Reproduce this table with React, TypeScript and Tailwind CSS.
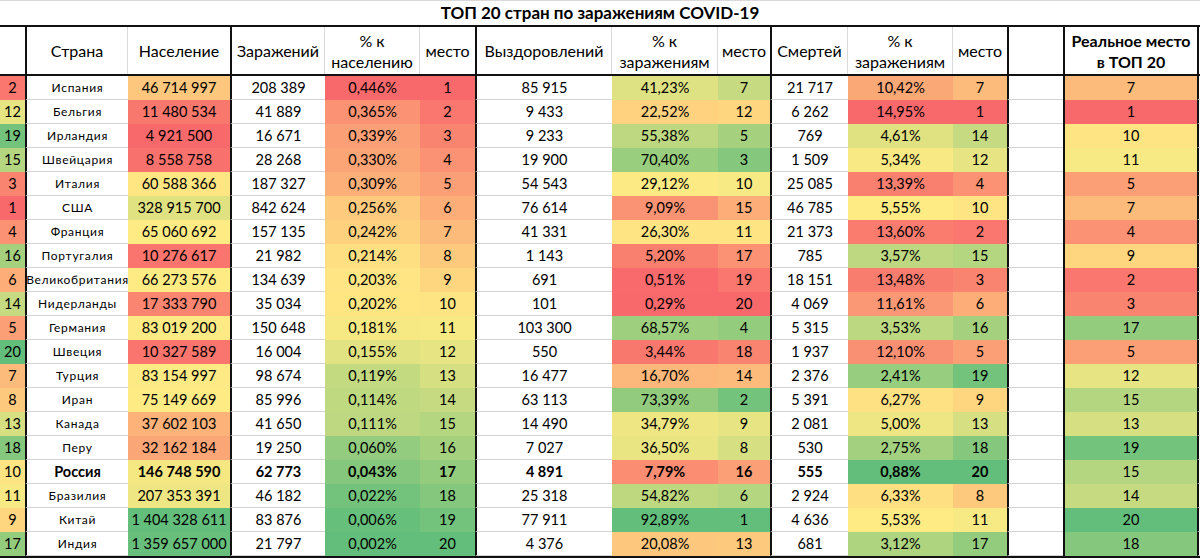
import React from "react";

type Row = [number, string, number, string, string, number, string, string, number, string, string, number, number];

const rows: Row[] = [
  [2, "Испания", 46714997, "208 389", "0,446%", 1, "85 915", "41,23%", 7, "21 717", "10,42%", 7, 7],
  [12, "Бельгия", 11480534, "41 889", "0,365%", 2, "9 433", "22,52%", 12, "6 262", "14,95%", 1, 1],
  [19, "Ирландия", 4921500, "16 671", "0,339%", 3, "9 233", "55,38%", 5, "769", "4,61%", 14, 10],
  [15, "Швейцария", 8558758, "28 268", "0,330%", 4, "19 900", "70,40%", 3, "1 509", "5,34%", 12, 11],
  [3, "Италия", 60588366, "187 327", "0,309%", 5, "54 543", "29,12%", 10, "25 085", "13,39%", 4, 5],
  [1, "США", 328915700, "842 624", "0,256%", 6, "76 614", "9,09%", 15, "46 785", "5,55%", 10, 7],
  [4, "Франция", 65060692, "157 135", "0,242%", 7, "41 331", "26,30%", 11, "21 373", "13,60%", 2, 4],
  [16, "Португалия", 10276617, "21 982", "0,214%", 8, "1 143", "5,20%", 17, "785", "3,57%", 15, 9],
  [6, "Великобритания", 66273576, "134 639", "0,203%", 9, "691", "0,51%", 19, "18 151", "13,48%", 3, 2],
  [14, "Нидерланды", 17333790, "35 034", "0,202%", 10, "101", "0,29%", 20, "4 069", "11,61%", 6, 3],
  [5, "Германия", 83019200, "150 648", "0,181%", 11, "103 300", "68,57%", 4, "5 315", "3,53%", 16, 17],
  [20, "Швеция", 10327589, "16 004", "0,155%", 12, "550", "3,44%", 18, "1 937", "12,10%", 5, 5],
  [7, "Турция", 83154997, "98 674", "0,119%", 13, "16 477", "16,70%", 14, "2 376", "2,41%", 19, 12],
  [8, "Иран", 75149669, "85 996", "0,114%", 14, "63 113", "73,39%", 2, "5 391", "6,27%", 9, 15],
  [13, "Канада", 37602103, "41 650", "0,111%", 15, "14 490", "34,79%", 9, "2 081", "5,00%", 13, 13],
  [18, "Перу", 32162184, "19 250", "0,060%", 16, "7 027", "36,50%", 8, "530", "2,75%", 18, 19],
  [10, "Россия", 146748590, "62 773", "0,043%", 17, "4 891", "7,79%", 16, "555", "0,88%", 20, 15],
  [11, "Бразилия", 207353391, "46 182", "0,022%", 18, "25 318", "54,82%", 6, "2 924", "6,33%", 8, 14],
  [9, "Китай", 1404328611, "83 876", "0,006%", 19, "77 911", "92,89%", 1, "4 636", "5,53%", 11, 20],
  [17, "Индия", 1359657000, "21 797", "0,002%", 20, "4 376", "20,08%", 13, "681", "3,12%", 17, 18],
];

// excel 3-colour scale
const RED = [248, 105, 107];
const YEL = [255, 235, 132];
const GRN = [99, 190, 123];

const num = (v: string | number) => (typeof v === "number" ? v : parseFloat(v.replace(",", ".").replace(/\s/g, "")));

function median(a: number[]) {
  const s = [...a].sort((x, y) => x - y);
  const n = s.length;
  return n % 2 ? s[(n - 1) / 2] : (s[n / 2 - 1] + s[n / 2]) / 2;
}

function mix(a: number[], b: number[], t: number) {
  return `rgb(${a.map((c, i) => Math.round(c + (b[i] - c) * t)).join(",")})`;
}

// which columns are coloured, and the colour for the lowest value
const scales: Record<number, { low: number[]; high: number[] }> = {
  0: { low: RED, high: GRN },
  2: { low: RED, high: GRN },
  4: { low: GRN, high: RED },
  5: { low: RED, high: GRN },
  7: { low: RED, high: GRN },
  8: { low: GRN, high: RED },
  10: { low: GRN, high: RED },
  11: { low: RED, high: GRN },
  12: { low: RED, high: GRN },
};

function colorFor(col: number, v: number) {
  const vals = rows.map((r) => num(r[col]));
  const lo = Math.min(...vals);
  const hi = Math.max(...vals);
  const mid = median(vals);
  const { low, high } = scales[col];
  if (v <= mid) return mix(low, YEL, (v - lo) / (mid - lo));
  return mix(YEL, high, (v - mid) / (hi - mid));
}

const fmt = (n: number) => String(n).replace(/\B(?=(\d{3})+(?!\d))/g, " ");

const GRID =
  "grid grid-cols-[25px_103px_102px_95px_95px_55px_137px_106px_52px_78px_105px_54px_56px_134px_3px]";

// thick group separators, by grid column
const thick: Record<number, string> = {
  1: "border-l-2 border-l-[#111]",
  3: "border-l-2 border-l-[#111]",
  6: "border-l-2 border-l-[#111]",
  9: "border-l-2 border-l-[#111]",
  12: "border-l-2 border-l-[#111]",
  13: "border-l-2 border-l-[#111]",
  14: "border-l-2 border-l-[#111]",
};

const headThin = new Set([1, 3, 4, 6, 7, 9, 10]);

const heads: (string[] | null)[] = [
  null,
  ["Страна"],
  ["Население"],
  ["Заражений"],
  ["% к", "населению"],
  ["место"],
  ["Выздоровлений"],
  ["% к", "заражениям"],
  ["место"],
  ["Смертей"],
  ["% к", "заражениям"],
  ["место"],
  null,
  ["Реальное место", "в ТОП 20"],
  null,
];

function HeaderRow() {
  return (
    <div className={`${GRID} h-[49px] border-b-2 border-b-[#111]`}>
      {heads.map((h, i) => (
        <div
          key={i}
          className={`flex flex-col items-center justify-center leading-[21px] text-[16px] ${thick[i] ?? ""} ${
            headThin.has(i) ? "border-r border-r-[#d9d9d9]" : ""
          } ${i === 13 ? "font-bold" : ""}`}
        >
          {h?.map((line) => (
            <span key={line} className="whitespace-nowrap">
              {line}
            </span>
          ))}
        </div>
      ))}
    </div>
  );
}

function BodyRow({ r }: { r: Row }) {
  const bold = r[1] === "Россия";
  // data columns -> grid columns (grid col 12 is the empty spacer)
  const cells: { text: string; v?: number; col?: number; kind?: string }[] = [
    { text: String(r[0]), v: r[0], col: 0, kind: "rank" },
    { text: r[1], kind: "country" },
    { text: fmt(r[2]), v: r[2], col: 2 },
    { text: r[3] },
    { text: r[4], v: num(r[4]), col: 4 },
    { text: String(r[5]), v: r[5], col: 5 },
    { text: r[6] },
    { text: r[7], v: num(r[7]), col: 7 },
    { text: String(r[8]), v: r[8], col: 8 },
    { text: r[9] },
    { text: r[10], v: num(r[10]), col: 10 },
    { text: String(r[11]), v: r[11], col: 11 },
    { text: "", kind: "empty" },
    { text: String(r[12]), v: r[12], col: 12, kind: "real" },
    { text: "", kind: "empty" },
  ];

  return (
    <div className={`${GRID} h-6`}>
      {cells.map((c, i) => {
        const colored = c.col !== undefined;
        const isBold = bold && c.kind !== "rank" && c.kind !== "real" && c.kind !== "empty";
        return (
          <div
            key={i}
            style={colored ? { backgroundColor: colorFor(c.col!, c.v!) } : undefined}
            className={`flex items-center justify-center whitespace-nowrap ${thick[i] ?? ""} ${
              colored ? "" : "border-b border-b-[#d4d4d4]"
            } ${
              c.kind === "country" && !bold
                ? "text-[12px] tracking-[0.7px]"
                : "text-[14.5px]"
            } ${isBold ? "font-bold" : ""}`}
          >
            {c.text}
          </div>
        );
      })}
    </div>
  );
}

export default function App() {
  return (
    <div className="w-[1200px] h-[558px] bg-white text-black font-['Lato','Liberation_Sans',sans-serif] overflow-hidden">
      <div className="h-[27px] border-t border-t-[#d9d9d9] border-b-2 border-b-[#111] flex items-center justify-center text-[17px] font-bold">
        ТОП 20 стран по заражениям COVID-19
      </div>
      <HeaderRow />
      {rows.map((r) => (
        <BodyRow key={r[1]} r={r} />
      ))}
      <div className="h-[2px] bg-[#111]" />
    </div>
  );
}
